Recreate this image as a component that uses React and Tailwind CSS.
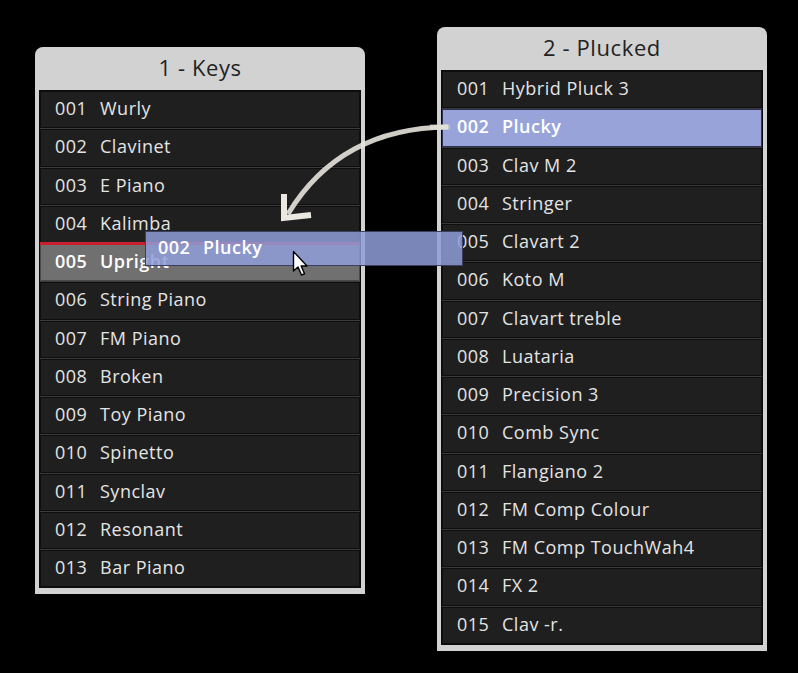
const keys = [
  ["001", "Wurly"],
  ["002", "Clavinet"],
  ["003", "E Piano"],
  ["004", "Kalimba"],
  ["005", "Upright"],
  ["006", "String Piano"],
  ["007", "FM Piano"],
  ["008", "Broken"],
  ["009", "Toy Piano"],
  ["010", "Spinetto"],
  ["011", "Synclav"],
  ["012", "Resonant"],
  ["013", "Bar Piano"],
];

const plucked = [
  ["001", "Hybrid Pluck 3"],
  ["002", "Plucky"],
  ["003", "Clav M 2"],
  ["004", "Stringer"],
  ["005", "Clavart 2"],
  ["006", "Koto M"],
  ["007", "Clavart treble"],
  ["008", "Luataria"],
  ["009", "Precision 3"],
  ["010", "Comb Sync"],
  ["011", "Flangiano 2"],
  ["012", "FM Comp Colour"],
  ["013", "FM Comp TouchWah4"],
  ["014", "FX 2"],
  ["015", "Clav -r."],
];

function Row({ num, name, variant }) {
  let cls = "bg-[#1f1f1f] border-[#0e0e0e] text-[#e4e4e4]";
  if (variant === "selected") cls = "bg-[#98a4d9] border-[#2a3158] text-white font-semibold";
  if (variant === "target") cls = "bg-[#707070] border-[#4a4a4a] text-white font-semibold";
  return (
    <div className={"relative h-[37.25px] border flex items-center pl-[14px] pb-[2px] text-[18px] tracking-[0.5px] " + cls}>
      {variant === "target" && (
        <div className="absolute left-[-1px] right-[-1px] top-[-3px] h-[3px] bg-[#c8202c]" />
      )}
      <span className="w-[45px]">{num}</span>
      <span>{name}</span>
    </div>
  );
}

function Panel({ title, items, selected, target, className }) {
  return (
    <div className={"w-[330px] bg-[#d2d2d2] rounded-t-[8px] px-[4px] pb-[6px] " + className}>
      <div className="h-[43px] flex items-center justify-center pb-[3px] text-[22px] text-[#222] tracking-[0.6px]">
        {title}
      </div>
      <div className="flex flex-col gap-px bg-[#3a3a3a] border border-[#0c0c0c]">
        {items.map(([n, name]) => (
          <Row
            key={n}
            num={n}
            name={name}
            variant={n === selected ? "selected" : n === target ? "target" : null}
          />
        ))}
      </div>
    </div>
  );
}

export default function App() {
  return (
    <div
      className="relative w-[798px] h-[673px] bg-black overflow-hidden"
      style={{ fontFamily: '"Open Sans", "Noto Sans", sans-serif' }}
    >
      <div className="flex items-start pl-[35px] gap-[72px]">
        <Panel title="1 - Keys" items={keys} target="005" className="mt-[47px]" />
        <Panel title="2 - Plucked" items={plucked} selected="002" className="mt-[27px]" />
      </div>

      {/* drag arrow */}
      <svg className="absolute left-0 top-0" width="798" height="673">
        <line x1="430" y1="127" x2="450" y2="127" stroke="#c9c9c4" strokeWidth="5" opacity="0.8" />
        <path
          d="M448 127 Q340 128 288 214"
          fill="none"
          stroke="#e6e3dc"
          strokeWidth="5"
          opacity="0.9"
        />
        <path
          d="M284 194 L284 218 L311 215"
          fill="none"
          stroke="#ebe8e1"
          strokeWidth="6"
          strokeLinejoin="miter"
        />
      </svg>

      {/* drag ghost */}
      <div className="absolute left-[145px] top-[231px] w-[318px] h-[35px] bg-[#8f9cd8]/85 border border-[#3b4060] flex items-center pl-[12px] pb-[2px] text-[18px] font-semibold text-white tracking-[0.5px]">
        <span className="w-[45px]">002</span>
        <span>Plucky</span>
      </div>

      {/* cursor */}
      <svg className="absolute left-[292px] top-[250px]" width="20" height="28" viewBox="0 0 20 28">
        <path
          d="M1.5 1.5 L1.5 21 L6 17 L9.5 25 L12.5 23.8 L9.2 16 L15 16 Z"
          fill="#fff"
          stroke="#000"
          strokeWidth="1.4"
          strokeLinejoin="round"
        />
      </svg>
    </div>
  );
}
